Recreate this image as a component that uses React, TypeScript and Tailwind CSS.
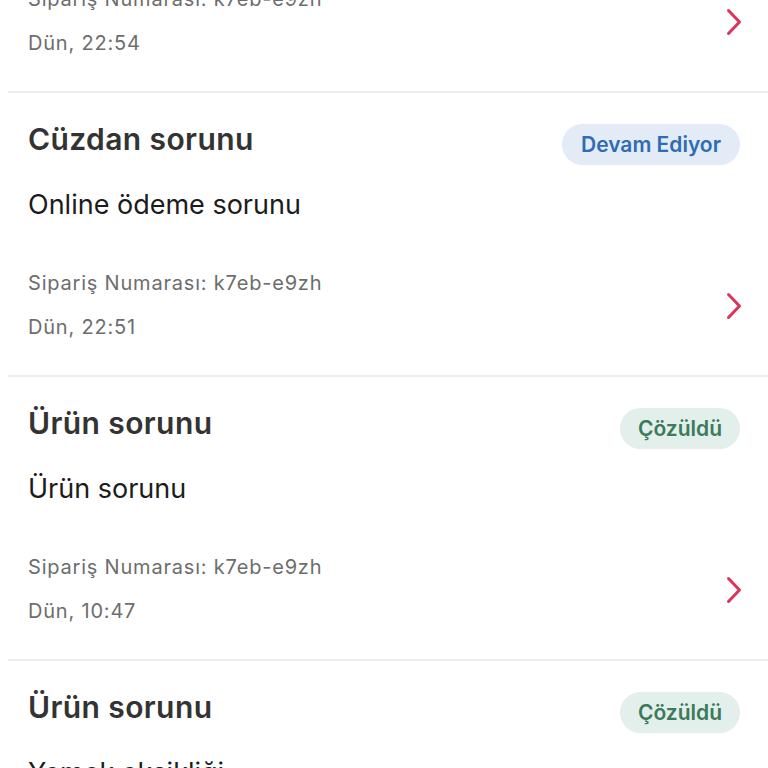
import React from 'react'

type Ticket = {
  title: string
  subtitle: string
  orderNo: string
  date: string
  status: 'progress' | 'done'
}

const tickets: Ticket[] = [
  { title: 'Ürün sorunu', subtitle: 'Ürün sorunu', orderNo: 'k7eb-e9zh', date: 'Dün, 22:54', status: 'done' },
  { title: 'Cüzdan sorunu', subtitle: 'Online ödeme sorunu', orderNo: 'k7eb-e9zh', date: 'Dün, 22:51', status: 'progress' },
  { title: 'Ürün sorunu', subtitle: 'Ürün sorunu', orderNo: 'k7eb-e9zh', date: 'Dün, 10:47', status: 'done' },
  { title: 'Ürün sorunu', subtitle: 'Yemek eksikliği', orderNo: 'k7eb-e9zh', date: 'Dün, 10:40', status: 'done' },
]

function StatusBadge({ status }: { status: Ticket['status'] }) {
  if (status === 'progress') {
    return (
      <span className="mt-[3px] h-[41px] px-[19px] rounded-full bg-[#e2ebf6] text-[#2f6cb4] text-[21px] font-semibold leading-[41px] whitespace-nowrap">
        Devam Ediyor
      </span>
    )
  }
  return (
    <span className="mt-[3px] h-[41px] px-[18px] rounded-full bg-[#e3efea] text-[#3b7a5b] text-[21px] font-semibold leading-[41px] whitespace-nowrap">
      Çözüldü
    </span>
  )
}

function TicketRow({ ticket }: { ticket: Ticket }) {
  return (
    <div>
      <div className="h-[282px] pt-[28px] pl-[28px] pr-[26px]">
        <div className="flex items-start justify-between pr-[2px]">
          <h2 className="text-[30px] leading-[36px] font-semibold tracking-[0.4px] text-[#333333]">{ticket.title}</h2>
          <StatusBadge status={ticket.status} />
        </div>
        <p className="mt-[24px] text-[27px] leading-[32px] text-[#1c1c1c]">{ticket.subtitle}</p>
        <div className="mt-[50px] flex items-center justify-between">
          <div className="text-[20px] leading-[24px] tracking-[0.8px] text-[#6d6d6d]">
            <p>Sipariş Numarası: {ticket.orderNo}</p>
            <p className="mt-[20px]">{ticket.date}</p>
          </div>
          <svg width="16" height="28" viewBox="0 0 16 28" fill="none" className="mt-[2px]">
            <path d="M2.5 2.5 L13.5 14 L2.5 25.5" stroke="#dc335a" strokeWidth="3" strokeLinecap="round" strokeLinejoin="round" />
          </svg>
        </div>
      </div>
      <div className="ml-2 h-[2px] bg-[#ededed]" />
    </div>
  )
}

export default function App() {
  return (
    <div className="h-screen overflow-hidden bg-white" style={{ fontFamily: 'Inter, "Noto Sans", sans-serif' }}>
      <div className="-mt-[191px]">
        {tickets.map((t, i) => (
          <TicketRow key={i} ticket={t} />
        ))}
      </div>
    </div>
  )
}
